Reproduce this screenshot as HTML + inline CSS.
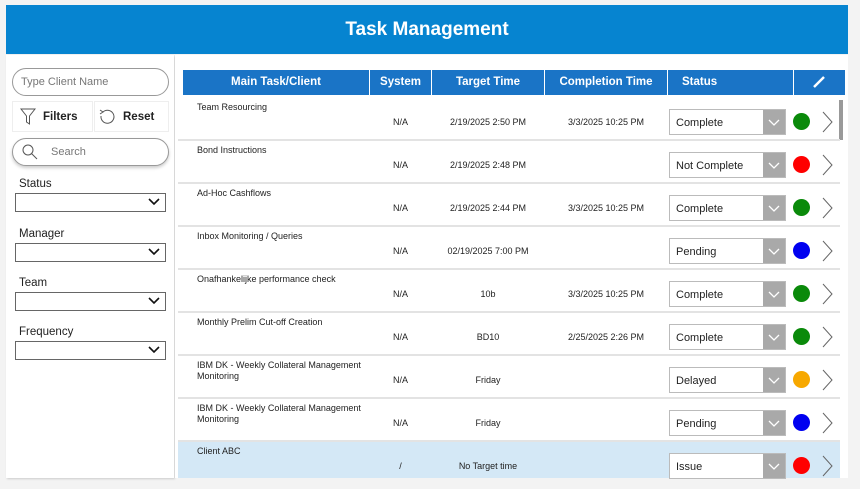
<!DOCTYPE html>
<html><head><style>
*{box-sizing:border-box;margin:0;padding:0}
body{width:860px;height:488px;background:#f3f3f3;font-family:"Liberation Sans",sans-serif;position:relative;overflow:hidden;color:#222}
.a{position:absolute}
.hdr{left:6px;top:5px;width:842px;height:49px;background:#0684d0;color:#fff;font-weight:bold;font-size:19px;text-align:center;line-height:49px}
.left{left:6px;top:55px;width:168px;height:423px;background:#fff;box-shadow:1px 1px 2px #ccc}
.main{left:175px;top:55px;width:673px;height:423px;background:#fff}
.pill{border:1px solid #999;border-radius:14px;background:#fff;font-size:11px;color:#777}
.th{top:70px;height:25px;background:#1a74c6;color:#fff;font-weight:bold;font-size:11.5px;text-align:center;line-height:25px}
.row{left:178px;width:662px;height:43px;border-bottom:2px solid #e3e3e3}
.t{font-size:9px;left:19px;top:4px;line-height:11px}
.v{font-size:9px;top:19px;text-align:center}
.sel{left:491px;top:11px;width:117px;height:26px;border:1px solid #bbb;background:#fff;font-size:11px;line-height:27px;padding-left:6px}
.sel b{position:absolute;right:0;top:0;width:22px;height:24px;background:#a9a9a9}
.dot{left:615px;top:15px;width:17px;height:17px;border-radius:50%}
.flab{font-size:11.5px;left:19px}
.dd{left:9px;width:151px;height:19px;border:1px solid #666;background:#fff}
</style></head><body>
<div class="a hdr">Task Management</div>
<div class="a left"></div>
<div class="a main"></div>
<div class="a pill" style="left:12px;top:68px;width:157px;height:28px;line-height:26px;padding-left:8px">Type Client Name</div>
<div class="a" style="left:12px;top:101px;width:81px;height:31px;border:1px solid #eee;font-size:11.5px;font-weight:bold;line-height:31px;padding-left:30px">Filters</div>
<svg class="a" style="left:20px;top:108px" width="16" height="18"><path d="M1 1H15L9.5 8V16L6.5 14V8Z" fill="none" stroke="#555" stroke-width="1"/></svg>
<div class="a" style="left:94px;top:101px;width:75px;height:31px;border:1px solid #eee;font-size:11.5px;font-weight:bold;line-height:31px;padding-left:28px">Reset</div>
<svg class="a" style="left:98px;top:108px" width="18" height="18"><path d="M5 4A6.5 6.5 0 1 1 3 8" fill="none" stroke="#555" stroke-width="1"/><path d="M2 2L5 4L2 6" fill="none" stroke="#555"/></svg>
<div class="a pill" style="left:12px;top:138px;width:157px;height:28px;line-height:26px;padding-left:38px;box-shadow:0 2px 3px #ccc">Search</div>
<svg class="a" style="left:21px;top:143px" width="18" height="18"><circle cx="7" cy="7" r="5" fill="none" stroke="#555"/><path d="M10.5 10.5L16 16" stroke="#555"/></svg>
<div class="a flab" style="top:178px">Status</div><div class="a dd" style="left:15px;top:193px"></div>
<div class="a flab" style="top:228px">Manager</div><div class="a dd" style="left:15px;top:243px"></div>
<div class="a flab" style="top:277px">Team</div><div class="a dd" style="left:15px;top:292px"></div>
<div class="a flab" style="top:326px">Frequency</div><div class="a dd" style="left:15px;top:341px"></div>
<svg class="a" style="left:0;top:0" width="860" height="488"><g fill="none" stroke="#111" stroke-width="1.6"><path d="M149 199l5 5 5-5M149 249l5 5 5-5M149 298l5 5 5-5M149 347l5 5 5-5"/></g></svg>
<div class="a th" style="left:183px;width:186px">Main Task/Client</div>
<div class="a th" style="left:370px;width:61px">System</div>
<div class="a th" style="left:432px;width:112px">Target Time</div>
<div class="a th" style="left:545px;width:122px">Completion Time</div>
<div class="a th" style="left:668px;width:125px;text-align:left;padding-left:14px">Status</div>
<div class="a th" style="left:794px;width:51px"></div>
<svg class="a" style="left:811px;top:74px" width="16" height="16"><path d="M3 13L13 3" stroke="#fff" stroke-width="2.5"/></svg>
<div class="a" style="left:839px;top:100px;width:4px;height:40px;background:#999"></div>
<div id="rows"></div>
<script>
var d=[["Team Resourcing","N/A","2/19/2025 2:50 PM","3/3/2025 10:25 PM","Complete","#0a8a0a"],
["Bond Instructions","N/A","2/19/2025 2:48 PM","","Not Complete","#f00"],
["Ad-Hoc Cashflows","N/A","2/19/2025 2:44 PM","3/3/2025 10:25 PM","Complete","#0a8a0a"],
["Inbox Monitoring / Queries","N/A","02/19/2025 7:00 PM","","Pending","#0000f0"],
["Onafhankelijke performance check","N/A","10b","3/3/2025 10:25 PM","Complete","#0a8a0a"],
["Monthly Prelim Cut-off Creation","N/A","BD10","2/25/2025 2:26 PM","Complete","#0a8a0a"],
["IBM DK - Weekly Collateral Management<br>Monitoring","N/A","Friday","","Delayed","#f7a800"],
["IBM DK - Weekly Collateral Management<br>Monitoring","N/A","Friday","","Pending","#0000f0"],
["Client ABC","/","No Target time","","Issue","#f00"]];
var h="";d.forEach(function(r,i){var top=98+43*i;var bg=i==8?"background:#d4e8f6;height:36px;border:none;":"";
h+='<div class="a row" style="top:'+top+'px;'+bg+'"><div class="a t">'+r[0]+'</div>'+
'<div class="a v" style="left:192px;width:61px">'+r[1]+'</div><div class="a v" style="left:254px;width:112px">'+r[2]+'</div><div class="a v" style="left:367px;width:122px">'+r[3]+'</div>'+
'<div class="a sel">'+r[4]+'<b><svg width="22" height="24"><path d="M6 10l5 5 5-5" fill="none" stroke="#fff" stroke-width="1.3"/></svg></b></div>'+
'<div class="a dot" style="background:'+r[5]+'"></div>'+
'<svg class="a" style="left:642px;top:12px" width="14" height="24"><path d="M3 2L12 12L3 22" fill="none" stroke="#666" stroke-width="1"/></svg></div>';});
document.getElementById("rows").innerHTML=h;
</script>
</body></html>
